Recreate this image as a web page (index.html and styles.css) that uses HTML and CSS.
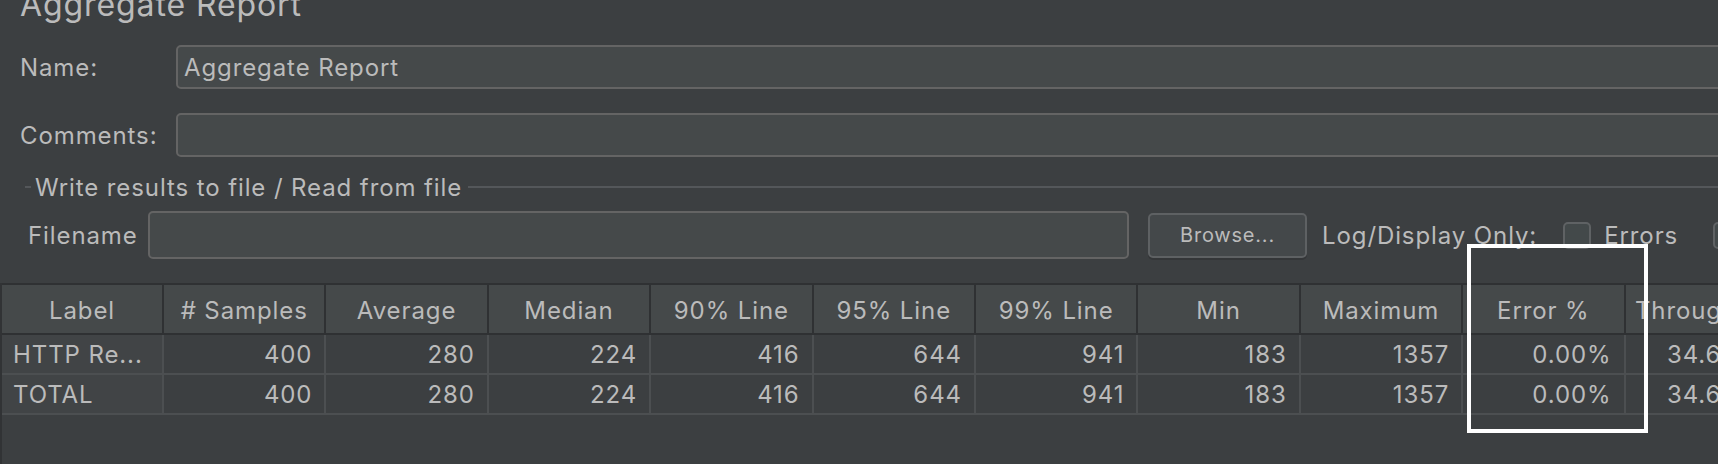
FILE: index.html
```html
<!DOCTYPE html>
<html lang="en">
<head>
<meta charset="utf-8">
<title>Aggregate Report</title>
<link rel="stylesheet" href="styles.css">
</head>
<body>
<div class="page">
  <h1 class="title">Aggregate Report</h1>

  <div class="form-row name-row">
    <label class="form-label">Name:</label>
    <div class="field">Aggregate Report</div>
  </div>

  <div class="form-row comments-row">
    <label class="form-label">Comments:</label>
    <div class="field"></div>
  </div>

  <div class="group-title">
    <span class="group-dash"></span>
    <span class="group-text">Write results to file / Read from file</span>
    <span class="group-line"></span>
  </div>

  <div class="file-row">
    <label class="file-label">Filename</label>
    <div class="field file-field"></div>
    <button class="browse">Browse...</button>
    <span class="log-label">Log/Display Only:</span>
    <span class="checkbox"></span>
    <span class="check-label">Errors</span>
    <span class="checkbox checkbox-next"></span>
    <span class="check-label">Successes</span>
  </div>

  <div class="table-wrap">
    <div class="grid">
      <div class="th">Label</div>
      <div class="th"># Samples</div>
      <div class="th">Average</div>
      <div class="th">Median</div>
      <div class="th">90% Line</div>
      <div class="th">95% Line</div>
      <div class="th">99% Line</div>
      <div class="th">Min</div>
      <div class="th">Maximum</div>
      <div class="th">Error %</div>
      <div class="th">Throughput</div>
      <div class="th">Received KB/sec</div>
      <div class="th">Sent KB/sec</div>

      <div class="td td-label">HTTP Re...</div>
      <div class="td">400</div>
      <div class="td">280</div>
      <div class="td">224</div>
      <div class="td">416</div>
      <div class="td">644</div>
      <div class="td">941</div>
      <div class="td">183</div>
      <div class="td">1357</div>
      <div class="td">0.00%</div>
      <div class="td">34.6/sec</div>
      <div class="td">43.12</div>
      <div class="td">4.49</div>

      <div class="td td-label">TOTAL</div>
      <div class="td">400</div>
      <div class="td">280</div>
      <div class="td">224</div>
      <div class="td">416</div>
      <div class="td">644</div>
      <div class="td">941</div>
      <div class="td">183</div>
      <div class="td">1357</div>
      <div class="td">0.00%</div>
      <div class="td">34.6/sec</div>
      <div class="td">43.12</div>
      <div class="td">4.49</div>
    </div>
  </div>

  <div class="highlight"></div>
</div>
</body>
</html>
```

FILE: styles.css
```css
html, body {
  margin: 0;
  padding: 0;
}

body {
  width: 1718px;
  height: 464px;
  overflow: hidden;
  background: #3c3f41;
  color: #bbbbbb;
  font-family: Inter, "Noto Sans", "Liberation Sans", sans-serif;
  font-size: 24px;
  letter-spacing: 0.9px;
}

.page {
  position: relative;
  display: flex;
  flex-direction: column;
  width: 1718px;
  height: 464px;
}

.title {
  margin: -12px 0 0 20px;
  height: 34px;
  line-height: 34px;
  font-size: 32px;
  letter-spacing: 0.9px;
  font-weight: 400;
  color: #bbbbbb;
  white-space: nowrap;
}

.form-row {
  display: flex;
  align-items: center;
  height: 44px;
  flex: 0 0 auto;
}

.name-row {
  margin-top: 23px;
}

.comments-row {
  margin-top: 24px;
}

.form-label {
  width: 176px;
  padding-left: 20px;
  flex: 0 0 auto;
  box-sizing: border-box;
  white-space: nowrap;
}

.field {
  box-sizing: border-box;
  height: 44px;
  flex: 0 0 1600px;
  border: 2px solid #646464;
  border-radius: 5px;
  background: #45494a;
  padding-left: 6px;
  display: flex;
  align-items: center;
  white-space: nowrap;
}

.group-title {
  display: flex;
  align-items: center;
  height: 24px;
  margin-top: 18px;
  flex: 0 0 auto;
}

.group-dash {
  margin-left: 25px;
  width: 6px;
  height: 2px;
  background: #54575a;
}

.group-text {
  padding: 0 6px 0 4px;
  white-space: nowrap;
}

.group-line {
  flex: 1;
  height: 2px;
  background: #54575a;
}

.file-row {
  display: flex;
  align-items: center;
  height: 48px;
  margin-top: 12px;
  flex: 0 0 auto;
  white-space: nowrap;
}

.file-label {
  width: 148px;
  padding-left: 28px;
  box-sizing: border-box;
  flex: 0 0 auto;
}

.file-field {
  flex: 0 0 981px;
  height: 48px;
}

.browse {
  margin-left: 19px;
  flex: 0 0 159px;
  height: 45px;
  box-sizing: border-box;
  border: 2px solid #5e6163;
  border-radius: 5px;
  background: #44484a;
  color: #bbbbbb;
  font-family: inherit;
  font-size: 20px;
  letter-spacing: 0.8px;
  box-shadow: 0 2px 0 #343638;
  padding: 0;
}

.log-label {
  margin-left: 15px;
}

.checkbox {
  margin-left: 26px;
  width: 28px;
  height: 27px;
  box-sizing: border-box;
  border: 2px solid #5f6264;
  border-radius: 5px;
  background: #43494a;
  flex: 0 0 auto;
}

.check-label {
  margin-left: 13px;
}

.checkbox-next {
  margin-left: 35px;
}

.table-wrap {
  margin-top: 24px;
  flex: 1;
  border-left: 2px solid #313335;
}

.grid {
  display: grid;
  grid-template-columns: 162px repeat(12, 162.4px);
  border-top: 2px solid #2f3133;
  width: max-content;
}

.th {
  box-sizing: border-box;
  height: 50px;
  padding-top: 3px;
  background: #45494a;
  border-right: 2px solid #2f3133;
  border-bottom: 2px solid #2f3133;
  display: flex;
  align-items: center;
  justify-content: center;
  white-space: nowrap;
  overflow: hidden;
}

.td {
  box-sizing: border-box;
  height: 40px;
  padding-top: 1px;
  background: #3c3f41;
  border-right: 2px solid #4c4f51;
  border-bottom: 2px solid #4c4f51;
  display: flex;
  align-items: center;
  justify-content: flex-end;
  padding-right: 12px;
  white-space: nowrap;
  overflow: hidden;
}

.td-label {
  justify-content: flex-start;
  padding-left: 11px;
  background: #414446;
}

.highlight {
  position: absolute;
  left: 1467px;
  top: 244px;
  width: 181px;
  height: 189px;
  box-sizing: border-box;
  border: 4px solid #ffffff;
}
```
